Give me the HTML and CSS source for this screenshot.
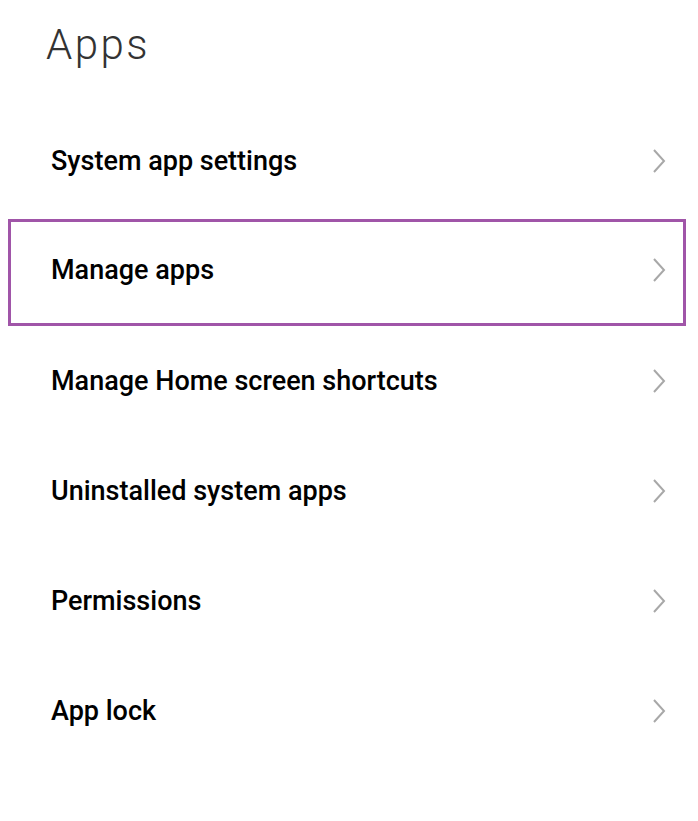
FILE: index.html
```html
<!DOCTYPE html>
<html lang="en">
<head>
    <meta charset="UTF-8">
    <meta name="viewport" content="width=device-width, initial-scale=1.0">
    <title>Apps</title>
    <link rel="stylesheet" href="styles.css">
</head>
<body>
    <h1 class="title">Apps</h1>

    <div class="list">
        <div class="row">
            <span class="label">System app settings</span>
            <svg class="chevron" viewBox="0 0 14 26"><path d="M2 2 L12 13 L2 24"/></svg>
        </div>
        <div class="row selected">
            <span class="label">Manage apps</span>
            <svg class="chevron" viewBox="0 0 14 26"><path d="M2 2 L12 13 L2 24"/></svg>
        </div>
        <div class="row">
            <span class="label">Manage Home screen shortcuts</span>
            <svg class="chevron" viewBox="0 0 14 26"><path d="M2 2 L12 13 L2 24"/></svg>
        </div>
        <div class="row">
            <span class="label">Uninstalled system apps</span>
            <svg class="chevron" viewBox="0 0 14 26"><path d="M2 2 L12 13 L2 24"/></svg>
        </div>
        <div class="row">
            <span class="label">Permissions</span>
            <svg class="chevron" viewBox="0 0 14 26"><path d="M2 2 L12 13 L2 24"/></svg>
        </div>
        <div class="row">
            <span class="label">App lock</span>
            <svg class="chevron" viewBox="0 0 14 26"><path d="M2 2 L12 13 L2 24"/></svg>
        </div>
    </div>
</body>
</html>
```

FILE: styles.css
```css
body {
    margin: 0;
    background: #fff;
    font-family: Roboto, 'Liberation Sans', sans-serif;
    color: #000;
}

.title {
    margin: 0;
    padding: 17px 0 0 46px;
    font-size: 42px;
    font-weight: 300;
    letter-spacing: 2.5px;
    line-height: 56px;
    color: #333;
}

.list {
    display: flex;
    flex-direction: column;
    padding: 33px 12px 0 8px;
}

.row {
    display: flex;
    align-items: center;
    justify-content: space-between;
    height: 110px;
    box-sizing: border-box;
    border: 3px solid transparent;
    padding: 0 17px 0 40px;
}

.row.selected {
    border-color: #a055a8;
    height: 107px;
    margin-top: 3px;
    padding-bottom: 5px;
}

.label {
    font-size: 27px;
    font-weight: 500;
    color: #000;
}

.chevron {
    width: 14px;
    height: 26px;
    fill: none;
    stroke: #a8a8a8;
    stroke-width: 2;
}
```
